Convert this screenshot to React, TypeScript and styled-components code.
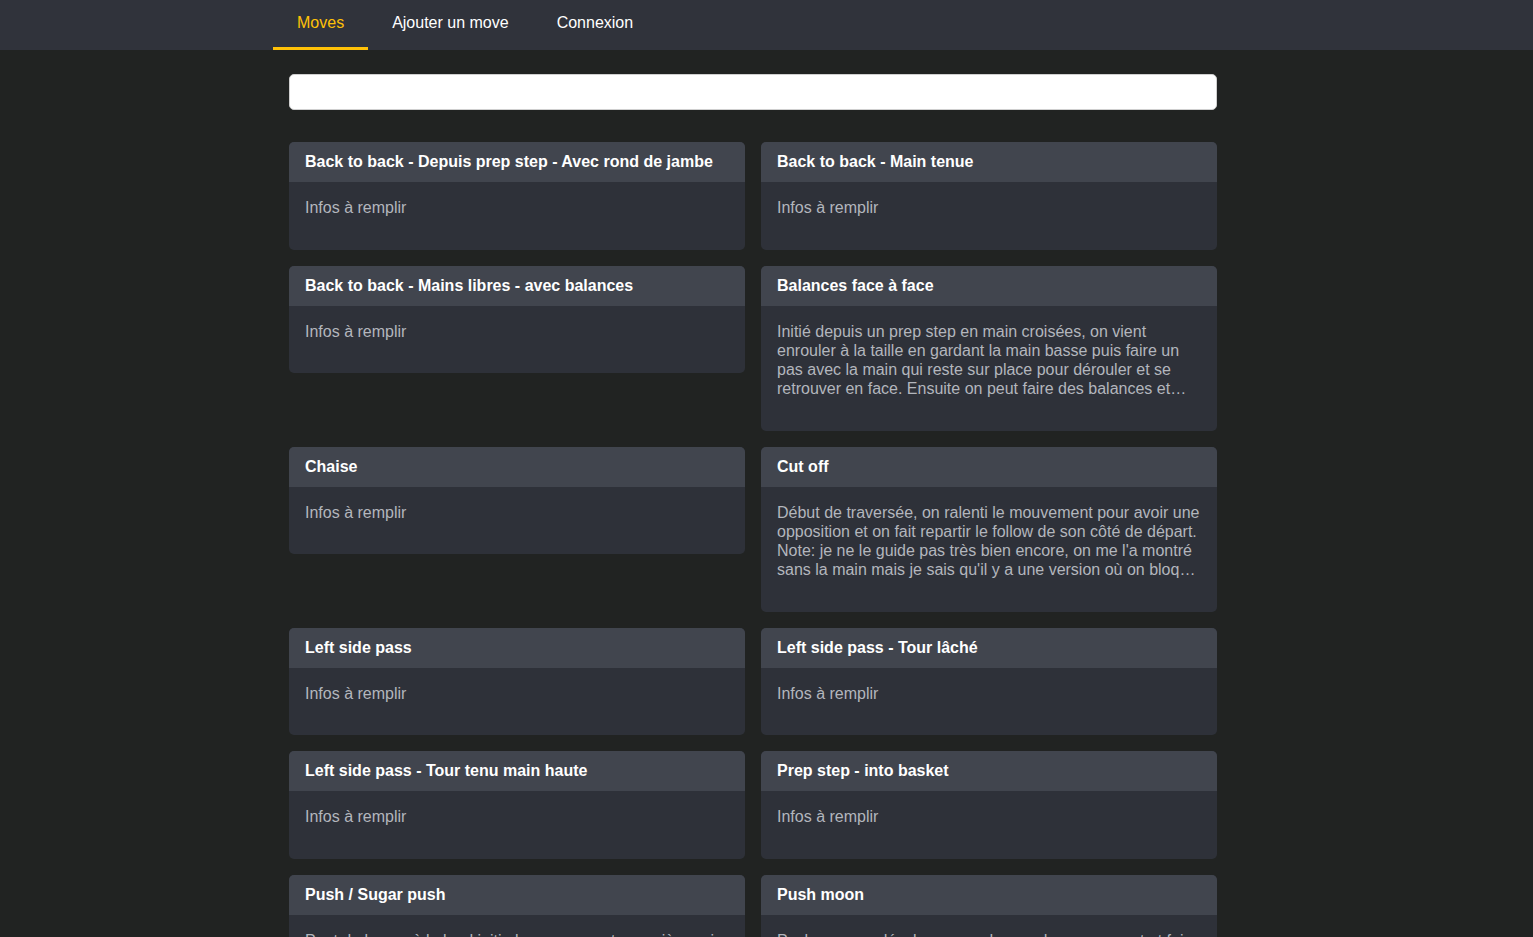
import styled, { createGlobalStyle } from "styled-components"

const moves = [
  { title: "Back to back - Depuis prep step - Avec rond de jambe", text: "" },
  { title: "Back to back - Main tenue", text: "" },
  { title: "Back to back - Mains libres - avec balances", text: "" },
  {
    title: "Balances face à face",
    text: "Initié depuis un prep step en main croisées, on vient enrouler à la taille en gardant la main basse puis faire un pas avec la main qui reste sur place pour dérouler et se retrouver en face. Ensuite on peut faire des balances et revenir en position ouverte.",
  },
  { title: "Chaise", text: "" },
  {
    title: "Cut off",
    text: "Début de traversée, on ralenti le mouvement pour avoir une opposition et on fait repartir le follow de son côté de départ. Note: je ne le guide pas très bien encore, on me l'a montré sans la main mais je sais qu'il y a une version où on bloque avec la main.",
  },
  { title: "Left side pass", text: "" },
  { title: "Left side pass - Tour lâché", text: "" },
  { title: "Left side pass - Tour tenu main haute", text: "" },
  { title: "Prep step - into basket", text: "" },
  {
    title: "Push / Sugar push",
    text: "Peut de base où le lead initie le mouvement en arrière puis ramène le follow vers lui avant de la renvoyer en position ouverte.",
  },
  {
    title: "Push moon",
    text: "Push avec un décalage pour donner du mouvement et faire tourner le couple en restant connecté.",
  },
]

const App = () => (
  <>
    <GlobalStyle />
    <NavBar>
      <NavInner>
        <NavLink $active>Moves</NavLink>
        <NavLink>Ajouter un move</NavLink>
        <NavLink>Connexion</NavLink>
      </NavInner>
    </NavBar>
    <Main>
      <Search type="text" />
      <Grid>
        {moves.map((m) => (
          <Card key={m.title}>
            <CardTitle>{m.title}</CardTitle>
            <CardBody>
              <Description>{m.text || "Infos à remplir"}</Description>
            </CardBody>
          </Card>
        ))}
      </Grid>
    </Main>
  </>
)

// Styled components
const GlobalStyle = createGlobalStyle`
  body {
    margin: 0;
    background: #212322;
    font-family: "Liberation Sans", Arial, sans-serif;
    font-size: 16px;
  }
`

const NavBar = styled.nav`
  height: 50px;
  background: #30333b;
`

const NavInner = styled.div`
  width: 960px;
  margin-left: 273px;
  display: flex;
  height: 100%;
`

const NavLink = styled.a<{ $active?: boolean }>`
  display: flex;
  align-items: center;
  padding: 0 24px 2px;
  color: ${(p) => (p.$active ? "#ffc107" : "#ffffff")};
  border-bottom: 3px solid ${(p) => (p.$active ? "#ffc107" : "transparent")};
  box-sizing: border-box;
  height: 50px;
  cursor: pointer;
`

const Main = styled.main`
  width: 928px;
  margin-left: 289px;
  padding-top: 24px;
`

const Search = styled.input`
  display: block;
  width: 100%;
  height: 36px;
  box-sizing: border-box;
  border: 1px solid #cfcfcf;
  border-radius: 5px;
  background: #ffffff;
  font-family: inherit;
  font-size: 16px;
  padding: 0 12px;
`

const Grid = styled.div`
  display: grid;
  grid-template-columns: 1fr 1fr;
  gap: 16px;
  align-items: start;
  margin-top: 32px;
  padding-bottom: 32px;
`

const Card = styled.div`
  border-radius: 5px;
  overflow: hidden;
  background: #2e3139;
`

const CardTitle = styled.div`
  background: #41454e;
  color: #ffffff;
  font-weight: 700;
  line-height: 20px;
  padding: 10px 16px;
`

const CardBody = styled.div`
  padding: 16px 16px 32.33px;
`

const Description = styled.p`
  margin: 0;
  color: #b3b6bd;
  line-height: 19.17px;
  display: -webkit-box;
  -webkit-line-clamp: 4;
  -webkit-box-orient: vertical;
  overflow: hidden;
`

export default App
